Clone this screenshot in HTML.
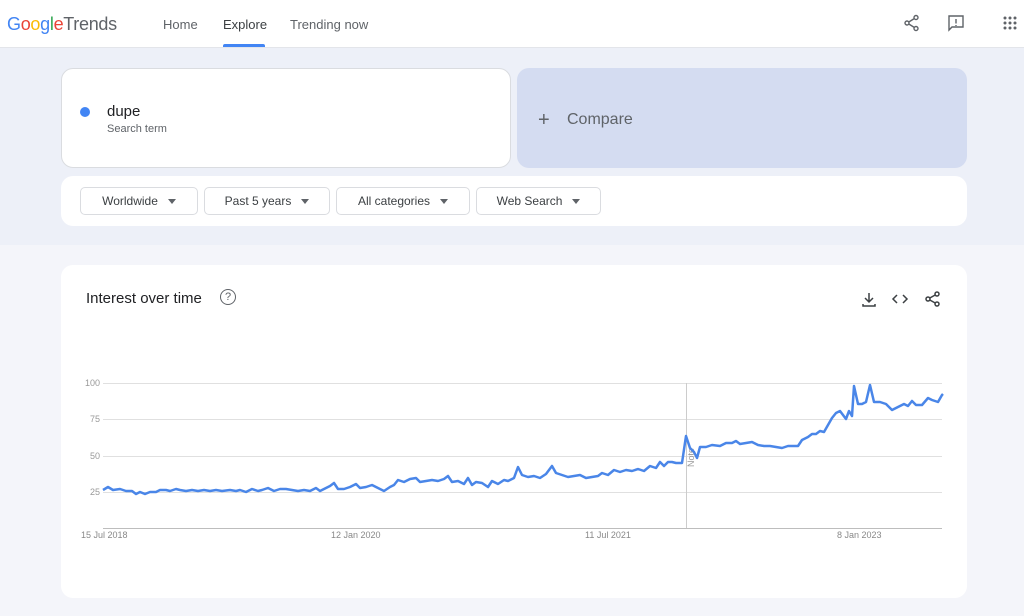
<!DOCTYPE html>
<html><head><meta charset="utf-8"><style>
*{margin:0;padding:0;box-sizing:border-box}
body{width:1024px;height:616px;overflow:hidden;background:#f4f5fa;font-family:"Liberation Sans",sans-serif;position:relative;color:#202124}
.hdr{position:absolute;left:0;top:0;width:1024px;height:48px;background:#fff;border-bottom:1px solid #e3e5ea}
.band{position:absolute;left:0;top:48px;width:1024px;height:197px;background:#edf0f8}
.abs{position:absolute}
.nav{position:absolute;top:17px;font-size:13px;color:#5f6368}
.card{position:absolute;background:#fff;border-radius:12px}
.btn{position:absolute;top:187px;height:28px;border:1px solid #dadce0;border-radius:5px;background:#fff;font-size:12px;color:#3c4043;line-height:26px;text-align:center}
.btn span{display:inline-block;width:0;height:0;border-left:4px solid transparent;border-right:4px solid transparent;border-top:5px solid #5f6368;margin-left:10px;vertical-align:middle}
.yl{position:absolute;left:80px;width:20px;text-align:right;font-size:9px;color:#999}
.xl{position:absolute;top:530px;font-size:9px;color:#888}
</style></head><body>
<div class="hdr"></div>
<div class="abs" style="left:7px;top:14px;font-size:18px;letter-spacing:-0.3px"><span style="color:#4285f4">G</span><span style="color:#ea4335">o</span><span style="color:#fbbc05">o</span><span style="color:#4285f4">g</span><span style="color:#34a853">l</span><span style="color:#ea4335">e</span><span style="color:#5f6368">Trends</span></div>
<div class="nav" style="left:163px">Home</div>
<div class="nav" style="left:223px;color:#3c4043">Explore</div>
<div class="abs" style="left:223px;top:44px;width:42px;height:3px;background:#4285f4;border-radius:2px 2px 0 0"></div>
<div class="nav" style="left:290px">Trending now</div>
<svg class="abs" style="left:902px;top:13px" width="20" height="20" viewBox="0 0 20 20" fill="none" stroke="#5f6368" stroke-width="1.4"><circle cx="14" cy="4.5" r="2"/><circle cx="5" cy="10" r="2"/><circle cx="14" cy="15.5" r="2"/><path d="M6.8 9 12.2 5.6M6.8 11 12.2 14.4"/></svg>
<svg class="abs" style="left:946px;top:13px" width="20" height="20" viewBox="0 0 20 20" fill="none" stroke="#5f6368" stroke-width="1.4"><path d="M3 3h14v11H6l-3 3z"/><path d="M10 6v4.5M10 12v1"/></svg>
<svg class="abs" style="left:1002px;top:15px" width="16" height="16" viewBox="0 0 16 16" fill="#5f6368"><circle cx="3" cy="3" r="1.5"/><circle cx="8" cy="3" r="1.5"/><circle cx="13" cy="3" r="1.5"/><circle cx="3" cy="8" r="1.5"/><circle cx="8" cy="8" r="1.5"/><circle cx="13" cy="8" r="1.5"/><circle cx="3" cy="13" r="1.5"/><circle cx="8" cy="13" r="1.5"/><circle cx="13" cy="13" r="1.5"/></svg>
<div class="band"></div>
<div class="card" style="left:61px;top:68px;width:450px;height:100px;border:1px solid #dadce0"></div>
<div class="abs" style="left:80px;top:107px;width:10px;height:10px;border-radius:50%;background:#4285f4"></div>
<div class="abs" style="left:107px;top:103px;font-size:15px">dupe</div>
<div class="abs" style="left:107px;top:123px;font-size:11px;color:#5f6368">Search term</div>
<div class="card" style="left:517px;top:68px;width:450px;height:100px;background:#d4dcf1"></div>
<div class="abs" style="left:538px;top:109px;font-size:20px;color:#5f6368;font-weight:300">+</div>
<div class="abs" style="left:567px;top:111px;font-size:16px;color:#5f6368">Compare</div>
<div class="card" style="left:61px;top:176px;width:906px;height:50px"></div>
<div class="btn" style="left:80px;width:118px">Worldwide<span></span></div>
<div class="btn" style="left:204px;width:126px">Past 5 years<span></span></div>
<div class="btn" style="left:336px;width:134px">All categories<span></span></div>
<div class="btn" style="left:476px;width:125px">Web Search<span></span></div>
<div class="card" style="left:61px;top:265px;width:906px;height:333px"></div>
<div class="abs" style="left:86px;top:290px;font-size:15px">Interest over time</div>
<div class="abs" style="left:220px;top:289px;width:16px;height:16px;border:1.3px solid #5f6368;border-radius:50%;font-size:11px;text-align:center;line-height:14px;color:#5f6368">?</div>
<svg class="abs" style="left:860px;top:290px" width="90" height="18" viewBox="0 0 90 18" fill="none" stroke="#3c4043" stroke-width="1.5"><path d="M9 3v9M5 8l4 4 4-4M3 14v2h12v-2"/><path d="M37 5l-4 4 4 4M43 5l4 4-4 4"/><circle cx="77" cy="4" r="2"/><circle cx="68" cy="9" r="2"/><circle cx="77" cy="14" r="2"/><path d="M69.8 8 75.2 5M69.8 10 75.2 13"/></svg>
<svg class="abs" style="left:0;top:0" width="1024" height="616">
<g stroke="#e0e0e0" stroke-width="1"><path d="M103 383.5H942M103 419.5H942M103 456.5H942M103 492.5H942"/></g>
<path d="M103 528.5H942" stroke="#bdbdbd"/>
<path d="M686.5 383V528" stroke="#ccc"/>
<text x="694" y="467" font-size="9" fill="#999" transform="rotate(-90 694 467)" font-family="Liberation Sans">Note</text>
<polyline fill="none" stroke="#4a86e8" stroke-width="2.5" stroke-linejoin="round" points="103,490 108,487 113,490 120,489 126,491 132,491 136,494 140,492 145,494 150,492 156,492 160,490 166,490 170,491 176,489 180,490 186,491 192,490 198,491 204,490 210,491 216,490 222,491 230,490 236,491 240,490 246,492 252,489 258,491 262,490 268,488 274,491 280,489 286,489 292,490 298,491 304,490 310,491 316,488 320,491 326,488 330,486 334,483 338,489 344,489 350,487 356,484 360,488 366,487 372,485 378,488 384,491 390,487 394,485 398,480 404,482 410,479 416,478 420,482 426,481 432,480 438,481 444,479 448,476 452,482 458,481 464,484 468,478 472,485 476,482 482,483 488,487 492,481 498,484 504,480 508,481 514,478 518,467 522,475 528,477 534,476 540,478 546,474 552,466 556,473 562,475 568,477 574,476 580,475 586,478 592,477 598,476 602,473 608,475 614,470 620,472 626,470 632,471 638,469 644,471 650,466 656,468 660,462 664,466 668,462 672,462 676,463 682,463 686,436 690,448 694,452 697,458 700,447 706,447 712,445 720,446 726,443 732,443 736,441 740,444 746,443 752,442 758,445 764,446 770,446 776,447 782,448 788,446 794,446 798,446 802,440 808,437 812,434 816,434 820,431 824,432 828,425 832,418 836,413 840,411 843,415 846,419 849,411 852,416 854,386 858,404 862,404 866,402 870,385 874,402 880,402 886,404 892,410 898,407 904,404 908,406 912,401 916,405 922,405 928,398 932,400 938,402 942,395 943,394"/>
</svg>
<div class="yl" style="top:378px">100</div>
<div class="yl" style="top:414px">75</div>
<div class="yl" style="top:451px">50</div>
<div class="yl" style="top:487px">25</div>
<div class="xl" style="left:81px">15 Jul 2018</div>
<div class="xl" style="left:331px">12 Jan 2020</div>
<div class="xl" style="left:585px">11 Jul 2021</div>
<div class="xl" style="left:837px">8 Jan 2023</div>
</body></html>
